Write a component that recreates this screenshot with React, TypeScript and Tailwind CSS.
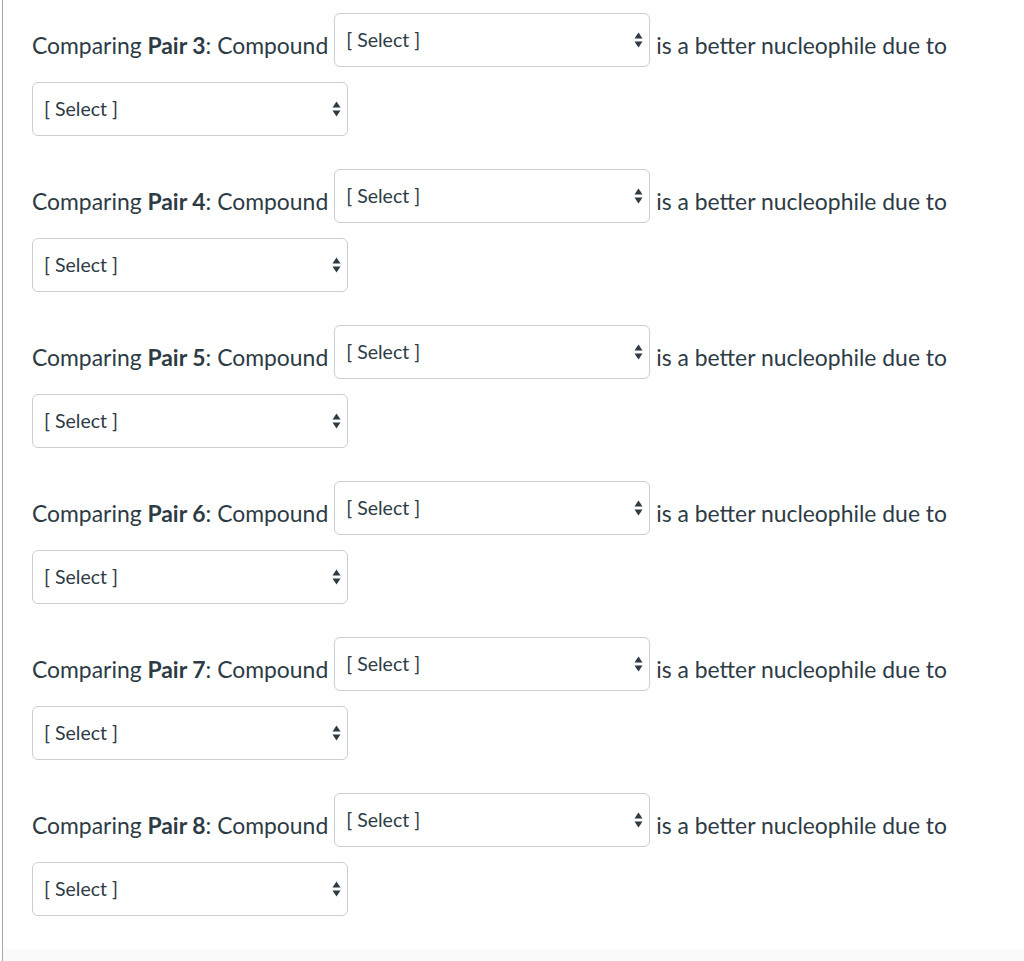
import React from "react";

const pairs = [3, 4, 5, 6, 7, 8];

function SelectArrows() {
  return (
    <svg
      className="pointer-events-none absolute right-[7px] top-1/2 -translate-y-1/2"
      width="9"
      height="16"
      viewBox="0 0 9 16"
    >
      <path d="M4.5 0.5 L8.5 6.5 L0.5 6.5 Z" fill="#2d3b45" />
      <path d="M0.5 9.5 L8.5 9.5 L4.5 15.5 Z" fill="#2d3b45" />
    </svg>
  );
}

function Dropdown({ className = "" }: { className?: string }) {
  return (
    <div className={"relative w-[316px] h-[54px] shrink-0 " + className}>
      <select
        className="appearance-none w-full h-full bg-white border border-[#cbcfd2] rounded-[6px] pl-[11px] pr-6 text-[19.5px] text-[#2d3b45] outline-none"
        defaultValue=""
      >
        <option value="">[ Select ]</option>
      </select>
      <SelectArrows />
    </div>
  );
}

export default function App() {
  return (
    <div
      className="min-h-[961px] bg-white text-[#2d3b45] flex flex-col"
      style={{ fontFamily: "Lato, 'Liberation Sans', sans-serif" }}
    >
      <div className="ml-[2px] border-l border-[#a6a6a6] flex-1 flex flex-col">
        <div className="pl-[29px] pt-[13px] flex-1">
          {pairs.map((n) => (
            <div key={n} className="mb-[33px]">
              <div className="flex items-start">
                <span className="mt-[17px] text-[22.9px] leading-[30px] whitespace-nowrap">
                  Comparing <b className="font-bold">Pair {n}</b>: Compound
                </span>
                <Dropdown className="ml-[6px]" />
                <span className="mt-[17px] ml-[6px] text-[22.9px] leading-[30px] whitespace-nowrap">
                  is a better nucleophile due to
                </span>
              </div>
              <Dropdown className="mt-[15px]" />
            </div>
          ))}
        </div>
        <div className="h-[13px] bg-[#fafafa]" />
      </div>
    </div>
  );
}
